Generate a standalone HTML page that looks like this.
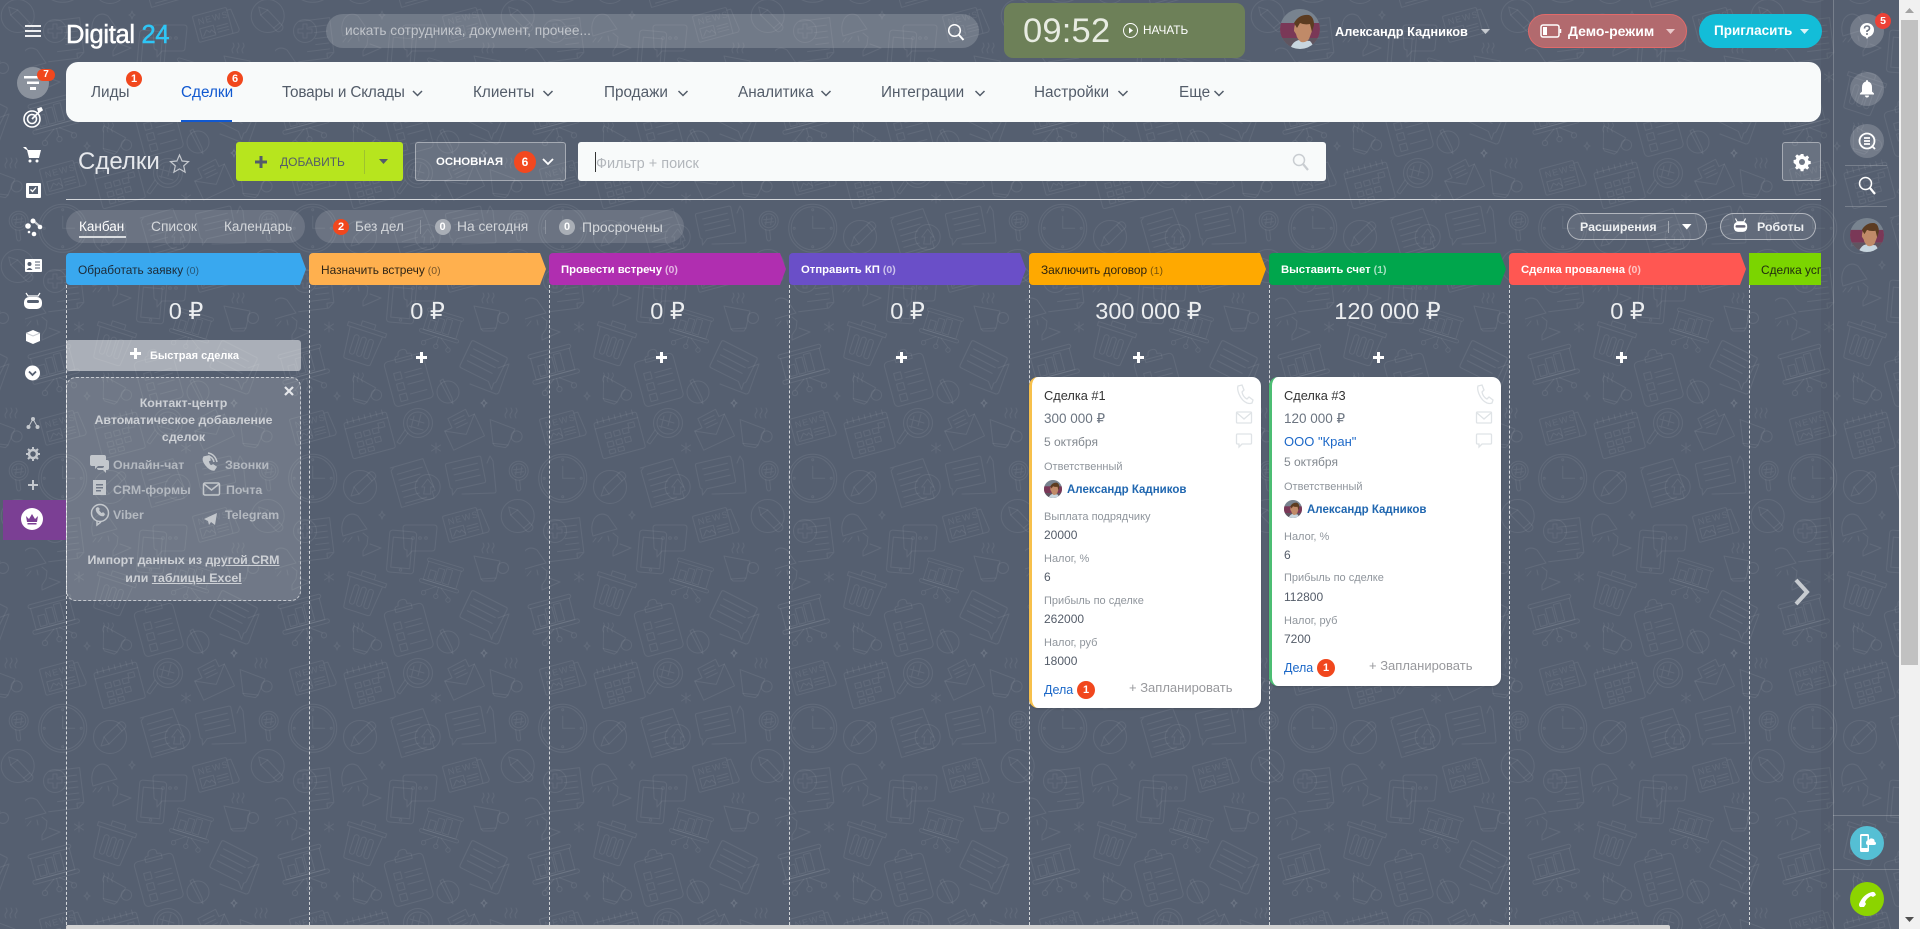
<!DOCTYPE html>
<html lang="ru"><head><meta charset="utf-8"><title>Сделки</title>
<style>
html,body{margin:0;padding:0;width:1920px;height:929px;overflow:hidden;background:#555f70;font-family:"Liberation Sans",sans-serif}
*{box-sizing:border-box}
.t{position:absolute;white-space:nowrap;line-height:20px;height:20px}
.a{position:absolute}
svg.a{overflow:visible}
.nav{color:#535c69;font-size:15.3px;top:83px}
.b{position:absolute;border-radius:50%;background:#f1471d;color:#fff;font-weight:bold;text-align:center;font-size:11px}
.st{position:absolute;top:253px;height:32px;border-radius:4px 0 0 4px;clip-path:polygon(0 0,calc(100% - 6px) 0,100% 50%,calc(100% - 6px) 100%,0 100%);font-size:11.9px;line-height:34px;padding-left:12px;white-space:nowrap;overflow:hidden}
.st i{font-style:normal;font-size:10.5px;opacity:.65;margin-left:3px}
.w{color:#fff;font-weight:bold;font-size:11.3px}
.dash{position:absolute;top:285px;height:640px;width:0;border-left:1px dashed rgba(255,255,255,.75)}
.sum{position:absolute;top:297px;height:28px;line-height:28px;font-size:23.5px;color:#eceef0;text-align:center;white-space:nowrap}
.pl{position:absolute;top:352px;width:11px;height:11px}
.pl:before,.pl:after{content:"";position:absolute;background:#fff}
.pl:before{left:0;top:4px;width:11px;height:2.5px}
.pl:after{left:4px;top:0;width:2.5px;height:11px}
.card{position:absolute;background:#fff;border-radius:9px;top:377px;box-shadow:0 1px 2px rgba(0,0,0,.15)}
.l{color:#8f959c;font-size:11px}
.v{color:#545c69;font-size:12px}
.cc{color:#cdd0d5;font-weight:bold;font-size:12.4px;text-align:center;left:66px;width:235px}
.ci{color:#b4b9c0;font-weight:bold;font-size:12.4px}
.rc{position:absolute;left:1850px;width:34px;border-radius:50%;background:rgba(255,255,255,.18)}
</style></head><body>

<svg class="a" style="left:0;top:0" width="1899" height="929">
<defs>
<g id="news"><rect x="-19" y="-13" width="35" height="27" rx="1.5"/><path d="M16-10h4l3 21q0 2-2 3l-5 0"/><text x="-15" y="-3" font-size="9" letter-spacing="1.2" font-family="Liberation Sans" fill="#fff" fill-opacity=".07" stroke="none">NEWS</text><rect x="-15" y="1" width="14" height="10"/><path d="M-13 9l4-5 3 3 2-2 3 4M2 3h11M2 6h11M2 9h11"/></g>
<g id="cup"><path d="M-15-11L11-6 7 11-8 12Z"/><path d="M-8 12l2 2h11l2-3"/><circle cx="14" cy="1" r="5.5"/></g>
<g id="steam"><path d="M-5 0q-2-3 0-5t0-5M0 0q-2-3 0-5t0-5M5 0q-2-3 0-5t0-5"/></g>
<g id="lamp"><path d="M-11-14q6-8 14-3l9 13q-12 3-24 7-3-9 1-17Z"/><path d="M-3 4l-4 5M3 3l1 5M-9 5l-3 4M8 0l5 4-1 8-4 6 0 5 18-8-11-4"/></g>
<g id="star"><path d="M0-4Q.6-.6 3 0 .6.6 0 4-.6.6-3 0-.6-.6 0-4Z"/></g>
<g id="ast"><path d="M0-5V5M-4.5-3L4.5 3M-4.5 3L4.5-3"/></g>
<g id="brd"><rect x="-22" y="-16" width="44" height="4" rx="2"/><path d="M-20-12v22h40v-22"/><rect x="-15" y="-3" width="7" height="11"/><rect x="-6" y="-8" width="7" height="16"/><rect x="3" y="-10" width="7" height="18"/><rect x="-24" y="10" width="48" height="4" rx="2"/><path d="M0 14v8M-3 14l-11 8M3 14l11 8"/><circle cx="-15" cy="25" r="2.6"/><circle cx="0" cy="25" r="2.6"/><circle cx="15" cy="25" r="2.6"/></g>
<g id="chat"><path d="M-19-11l32-5q2 0 2 2l3 23q0 2-2 2l-27 4-5 6 0-6q-2-1-2-3l-3-21q0-2 2-2Z"/><path d="M-14-5l25-4M-13 1l25-4M-12 7l25-4"/></g>
<g id="gl"><circle r="9.5"/><circle r="7"/><path d="M-3 9l1 9q1 3 3 2l1-1-1-9M-2-4l-1 8M3-4l-1 8M-5-1l9-1M-4 2l9-1"/></g>
<g id="pc"><circle r="16.5"/><path d="M-9 9l3-9 16-15q3-1 5 2t-1 5L-1 7Z"/><path d="M-6 0l5 7M7-12l5 6"/></g>
<g id="i" fill="none" stroke="#fff" stroke-opacity=".07" stroke-width="1" stroke-linejoin="round" stroke-linecap="round">
<use href="#news" transform="translate(36 27) rotate(-15)"/>
<use href="#news" transform="translate(189 124) rotate(-15)"/>
<g transform="translate(94 33) rotate(-15)"><rect x="-22" y="-16" width="44" height="37" rx="2"/><path d="M-22-10h44M-18-19v5M-12-19v5M-6-19v5M0-19v5M6-19v5M12-19v5M18-19v5"/><path d="M-14-3h6v5h-6zM-5-3h6v5h-6zM4-3h6v5h-6zM11-7h6v5h-6zM-14 6h6v5h-6zM-5 6h6v5h-6zM4 6h6v5h-6zM-14 14h6v4h-6zM-5 14h6v4h-6z"/></g>
<g transform="translate(143 23)"><circle r="14.5"/><circle r="11"/><path d="M-10 10l-8 11-3-2 8-12M-4-7l-3 12M3-9l-3 12M-8-4l14 4M-9 3l14 4"/></g>
<g transform="translate(186 28) rotate(-25)"><path d="M-16-4h8v-10l20-1 0 8h6v24l-34 0z"/><path d="M-16-4l18 12 16-15M-4-10h12M-4-6h12M-4-2h12"/></g>
<g transform="translate(228 33)"><use href="#cup" transform="rotate(10)"/><use href="#steam" transform="translate(8 -15)"/></g>
<g transform="translate(37.7 78.3)"><circle r="24"/><circle r="21.5"/><path d="M0-12V0H12"/><circle cy="-18.5" r="1"/><circle cy="18.5" r="1"/><circle cx="-18.5" r="1"/><circle cx="18.5" r="1"/></g>
<use href="#pc" transform="translate(85 87)"/>
<g transform="translate(139 82) rotate(-16)"><path d="M-19-20l34 0 3 34 0 0h-3v7h-34v-38l4-3"/><path d="M-14-12h26M-14-6h22M-14 0h18M-14 6h16M-14 12h16M-14 18h22"/></g>
<g transform="translate(152.7 87)"><circle r="12.5"/><path d="M0-8l-6 8h3l-1 7h7l0-7h3z"/></g>
<use href="#chat" transform="translate(192 73) rotate(-4)"/>
<path d="M187 94l2 0 30-1q2 0 2-2l-3-30-3-5-3 7"/>
<use href="#gl" transform="translate(243.7 70.7)"/>
<g transform="translate(242.7 116) rotate(90)"><use href="#pc"/></g>
<g transform="translate(45 138) rotate(-7)"><path d="M-18-19h30v35l-6 5h-30M12 16h-7v5"/><path d="M-10-12h18M-5-6h13M-5 0h13M-5 6h13M-14 12h22"/></g>
<g transform="translate(30 131)"><circle r="11.5"/><path d="M-2-7h4v5h5v4h-5v5h-4v-5h-5v-4h5z"/></g>
<use href="#lamp" transform="translate(80 133)"/>
<use href="#lamp" transform="translate(9 167)"/>
<use href="#star" transform="translate(107 115)"/>
<use href="#star" transform="translate(62 246)"/>
<use href="#star" transform="translate(209 253)"/>
<use href="#star" transform="translate(209 3)"/>
<use href="#ast" transform="translate(54 177)"/>
<use href="#ast" transform="translate(161 48)"/>
<g transform="translate(127 153) rotate(5)"><rect x="-14" y="-22" width="27" height="42" rx="3"/><rect x="-10" y="-15" width="19" height="30"/><circle cy="17" r="1.2"/></g>
<g><path d="M131 125h28q3 0 3 3l-2 20q0 3-3 3h-20l-5 6 0-7q-3 0-3-3l-1-19q0-3 3-3Z"/><circle cx="138" cy="138" r="1.3"/><circle cx="145" cy="138" r="1.3"/><circle cx="151" cy="138" r="1.3"/></g>
<g transform="translate(214 167)"><use href="#cup"/><use href="#steam" transform="translate(-1 -14)"/></g>
<g transform="translate(88 192) rotate(18)"><path d="M-20-15h40l0 4h-40zM-7-15v-5h14v5M-17-11l3 30q0 2 3 2h22q3 0 3-2l3-30"/><rect x="-10" y="-5" width="5" height="20" rx="2.5"/><rect x="-2.5" y="-5" width="5" height="20" rx="2.5"/><rect x="5" y="-5" width="5" height="20" rx="2.5"/></g>
<use href="#brd" transform="translate(167 176) rotate(17) scale(.85)"/>
<use href="#brd" transform="translate(28 215) rotate(-15)"/>
<g transform="translate(133 227) rotate(-15)"><rect x="-20" y="-20" width="40" height="46" rx="4"/><path d="M-8-20q0-3 4-3 0-5 5-5t4 5q5 0 4 3l0 3h-17z"/><path d="M-13-7h7v7h-7zM-13 4h7v7h-7zM-13 15h7v7h-7zM-2-5h17M-2 0h17M-2 7h17M-2 17h17"/></g>
<use href="#chat" transform="translate(207 212) rotate(18) scale(1.1) scale(-1 1)"/>
<path d="M195 234l26 10q2 0 3-2l10-28-11 4"/>
<g transform="translate(89 240) rotate(18)"><use href="#cup" transform="scale(.95)"/></g>
<use href="#steam" transform="translate(83 232) scale(.9)"/>
<g transform="translate(173 242)"><circle r="11"/><path d="M-5-13l-3 2 10 19 3 4-1-6z"/></g>
</g>
<pattern id="p" width="250" height="250" patternUnits="userSpaceOnUse" patternTransform="translate(25 150)"><use href="#i"/><use href="#i" x="-250"/><use href="#i" y="-250"/><use href="#i" x="-250" y="-250"/></pattern>
<clipPath id="av"><circle cx="20" cy="20" r="20"/></clipPath>
<g id="face" clip-path="url(#av)"><rect width="40" height="40" fill="#78838f"/><rect y="14" width="40" height="15" fill="#7a3857"/><rect y="29" width="40" height="11" fill="#5f5560"/><path d="M10 40q3-8 9-9l11 1q3 3 4 8z" fill="#c8d6df"/><path d="M16 13q8-5 15-1l1 10-3 8q-3 4-8 3-4-3-5-8l-2-3q0-5 2-9Z" fill="#c08a68"/><path d="M14 14q5-9 15-8 5 2 5 10l-2 7-2-8q-6 1-10-1l-3 5z" fill="#5c3c21"/></g>
</defs>
<rect width="1899" height="929" fill="#555f70"/>
<rect width="1899" height="929" fill="url(#p)"/>
<rect x="1821" width="12" height="929" fill="#000" fill-opacity=".035"/>
<rect x="1833" width="1" height="929" fill="#fff" fill-opacity=".2"/>
<rect x="1833" y="815" width="66" height="1" fill="#fff" fill-opacity=".2"/>
<rect x="1833" y="869" width="66" height="1" fill="#fff" fill-opacity=".2"/>
<rect x="1845" y="165" width="42" height="1" fill="#fff" fill-opacity=".2"/>
<rect x="1845" y="206" width="42" height="1" fill="#fff" fill-opacity=".2"/>
</svg>

<!-- scrollbars -->
<div class="a" style="left:1899px;top:0;width:21px;height:929px;background:#f1f1f1"></div>
<div class="a" style="left:1901px;top:20px;width:17px;height:645px;background:#c1c1c1"></div>
<svg class="a" style="left:1899px;top:0" width="21" height="929"><path d="M6 13l4.500-5 4.500 5z" fill="#a3a3a3"/><path d="M6 917l4.500 5 4.500-5z" fill="#505050"/></svg>
<div class="a" style="left:66px;top:925px;width:1604px;height:4px;background:#d2d2d2;border-radius:2px 2px 0 0"></div>

<!-- top bar -->
<svg class="a" style="left:24px;top:24px" width="18" height="14"><path d="M1 2h16M1 7h16M1 12h16" stroke="#fff" stroke-opacity=".9" stroke-width="2"/></svg>
<div class="t" style="left:66px;top:22px;height:26px;line-height:26px;font-size:25.5px;color:#fff;letter-spacing:-.3px;-webkit-text-stroke:.5px #fff">Digital <span style="color:#2fc6f6;-webkit-text-stroke:.5px #2fc6f6">24</span></div>
<div class="a" style="left:326px;top:14px;width:653px;height:34px;border-radius:17px;background:rgba(255,255,255,.17)"></div>
<div class="t" style="left:345px;top:21px;font-size:13.7px;color:rgba(255,255,255,.55)">искать сотрудника, документ, прочее...</div>
<svg class="a" style="left:947px;top:23px" width="18" height="18" fill="none" stroke="#fff" stroke-width="1.500"><circle cx="7.500" cy="7.500" r="5.800"/><path d="M12 12l4.500 5" stroke-width="2"/></svg>
<div class="a" style="left:1004px;top:3px;width:241px;height:55px;border-radius:9px;background:#6d8058"></div>
<div class="t" style="left:1023px;top:11px;height:40px;line-height:40px;font-size:34.5px;color:#e8ece2;letter-spacing:.2px">09:52</div>
<svg class="a" style="left:1122px;top:22px" width="17" height="17" fill="none" stroke="#fff"><circle cx="8.500" cy="8.500" r="7"/><path d="M7 5.500l4 3-4 3z" fill="#fff" stroke="none"/></svg>
<div class="t" style="left:1143px;top:20px;font-size:11.8px;color:#fff">НАЧАТЬ</div>
<svg class="a" style="left:1280px;top:9px" width="40" height="40" viewBox="0 0 40 40"><use href="#face"/></svg>
<div class="t" style="left:1335px;top:22px;font-size:12.8px;font-weight:bold;color:#fff">Александр Кадников</div>
<svg class="a" style="left:1481px;top:29px" width="9" height="6"><path d="M0 0h9L4.500 5z" fill="#c6cad0"/></svg>
<div class="a" style="left:1528px;top:14px;width:159px;height:34px;border-radius:17px;background:#b26a6e;border:1px solid #e26a6a"></div>
<svg class="a" style="left:1540px;top:23px" width="22" height="16" fill="none" stroke="#fff" stroke-width="1.500"><rect x="1" y="2" width="18" height="12" rx="2"/><rect x="3" y="4" width="4" height="8" fill="#fff" stroke="none"/><path d="M20.500 6v4"/></svg>
<div class="t" style="left:1568px;top:21px;font-size:14px;font-weight:bold;color:#fff">Демо-режим</div>
<svg class="a" style="left:1666px;top:29px" width="9" height="6"><path d="M0 0h9L4.500 5z" fill="#e9c9ca"/></svg>
<div class="a" style="left:1699px;top:14px;width:123px;height:34px;border-radius:17px;background:#13bdd8"></div>
<div class="t" style="left:1714px;top:21px;font-size:13.5px;font-weight:bold;color:#fff">Пригласить</div>
<svg class="a" style="left:1800px;top:29px" width="9" height="6"><path d="M0 0h9L4.500 5z" fill="#d8f4f9"/></svg>

<!-- nav -->
<div class="a" style="left:66px;top:62px;width:1755px;height:60px;border-radius:12px;background:#f8fafa"></div>
<div class="t nav" style="left:91px">Лиды</div>
<div class="b" style="left:126px;top:71px;width:16px;height:16px;line-height:16px">1</div>
<div class="t nav" style="left:181px;color:#1058d0">Сделки</div>
<div class="b" style="left:227px;top:71px;width:16px;height:16px;line-height:16px">6</div>
<div class="a" style="left:181px;top:120px;width:51px;height:2px;background:#1058d0"></div>
<div class="t nav" style="left:282px;letter-spacing:-.15px">Товары и Склады</div>
<div class="t nav" style="left:473px">Клиенты</div>
<div class="t nav" style="left:604px">Продажи</div>
<div class="t nav" style="left:738px">Аналитика</div>
<div class="t nav" style="left:881px">Интеграции</div>
<div class="t nav" style="left:1034px">Настройки</div>
<div class="t nav" style="left:1179px">Еще</div>
<svg class="a" style="left:0;top:0" width="1300" height="110" fill="none" stroke="#535c69" stroke-width="1.500"><path d="M413 91l4.500 4.500L422 91M543.500 91l4.500 4.500 4.500-4.500M678.500 91l4.500 4.500 4.500-4.500M821.500 91l4.500 4.500 4.500-4.500M975.500 91l4.500 4.500 4.500-4.500M1118.500 91l4.500 4.500 4.500-4.500M1214.500 91l4.500 4.500 4.500-4.500"/></svg>

<!-- toolbar -->
<div class="t" style="left:78px;top:147px;height:30px;line-height:30px;font-size:24px;color:#e6e8ec">Сделки</div>
<svg class="a" style="left:169px;top:153px" width="21" height="20" fill="none" stroke="#c3c7cd" stroke-width="1.200"><path d="M10.500 2l2.600 6 6.400.6-4.800 4.300 1.400 6.300-5.600-3.300-5.600 3.300 1.400-6.300L1.500 8.600 7.900 8z"/></svg>
<div class="a" style="left:236px;top:142px;width:167px;height:39px;border-radius:3px;background:#b7e51e"></div>
<svg class="a" style="left:254px;top:155px" width="14" height="14"><path d="M5.500 1h3v4.500H13v3H8.500V13h-3V8.500H1v-3h4.500z" fill="#535c69"/></svg>
<div class="t" style="left:280px;top:152px;font-size:12px;color:#535c69">ДОБАВИТЬ</div>
<div class="a" style="left:364px;top:150px;width:1px;height:24px;background:rgba(83,92,105,.25)"></div>
<svg class="a" style="left:379px;top:159px" width="9" height="6"><path d="M0 0h9L4.500 5z" fill="#535c69"/></svg>
<div class="a" style="left:415px;top:142px;width:151px;height:39px;border-radius:3px;background:rgba(255,255,255,.12);border:1px solid rgba(255,255,255,.4)"></div>
<div class="t" style="left:436px;top:152px;font-size:11.4px;font-weight:bold;color:#fff">ОСНОВНАЯ</div>
<div class="b" style="left:514px;top:151px;width:22px;height:22px;line-height:22px;font-size:12px;background:#f2481f">6</div>
<svg class="a" style="left:542px;top:157px" width="12" height="9" fill="none" stroke="#fff" stroke-width="1.800"><path d="M1 2l5 5 5-5"/></svg>
<div class="a" style="left:578px;top:142px;width:748px;height:39px;border-radius:3px;background:#f8fafa"></div>
<div class="a" style="left:595px;top:152px;width:1px;height:20px;background:#333"></div>
<div class="t" style="left:596px;top:154px;font-size:14.5px;color:#b2b6bb">Фильтр + поиск</div>
<svg class="a" style="left:1292px;top:153px" width="18" height="18" fill="none" stroke="#c9cdd1" stroke-width="1.500"><circle cx="7" cy="7" r="5.500"/><path d="M11 11l5 6" stroke-width="2.200"/></svg>
<div class="a" style="left:1782px;top:142px;width:39px;height:39px;border-radius:3px;background:rgba(255,255,255,.12);border:1px solid rgba(255,255,255,.4)"></div>
<svg class="a" style="left:1793px;top:153px" width="18" height="18" viewBox="0 0 18 18"><path d="M7.500 1h3l.4 2.300 1.700.7 1.900-1.300 2 2-1.300 1.900.7 1.700 2.300.4v3l-2.300.4-.7 1.700 1.300 1.900-2 2-1.900-1.300-1.700.7-.4 2.300h-3l-.4-2.300-1.700-.7-1.900 1.300-2-2 1.300-1.900-.7-1.700L0 10.500v-3l2.300-.4.7-1.700L1.700 3.500l2-2 1.900 1.300 1.700-.7z" transform="translate(.6 0) scale(.94)" fill="#fff"/><circle cx="9" cy="9" r="3" fill="#6e7684"/></svg>
<div class="a" style="left:66px;top:199px;width:1755px;height:1px;background:rgba(255,255,255,.75)"></div>

<!-- view + counters -->
<div class="a" style="left:66px;top:210px;width:239px;height:33px;border-radius:16.5px;background:rgba(255,255,255,.13)"></div>
<div class="t" style="left:79px;top:217px;font-size:13.5px;color:#fff">Канбан</div>
<div class="a" style="left:79px;top:236px;width:47px;height:2px;background:#d8dbdf"></div>
<div class="t" style="left:151px;top:217px;font-size:13.8px;color:#d5d8dc">Список</div>
<div class="t" style="left:224px;top:217px;font-size:13.5px;color:#d5d8dc">Календарь</div>
<div class="a" style="left:315px;top:210px;width:369px;height:33px;border-radius:16.5px;background:rgba(255,255,255,.13)"></div>
<div class="b" style="left:333px;top:219px;width:16px;height:16px;line-height:16px">2</div>
<div class="t" style="left:355px;top:217px;font-size:13.5px;color:#d5d8dc">Без дел</div>
<div class="a" style="left:420px;top:220px;width:1px;height:14px;background:rgba(255,255,255,.2)"></div>
<div class="b" style="left:434.5px;top:219px;width:16px;height:16px;line-height:16px;background:#a9aeb6">0</div>
<div class="t" style="left:457px;top:217px;font-size:13.8px;color:#d5d8dc">На сегодня</div>
<div class="a" style="left:545px;top:220px;width:1px;height:14px;background:rgba(255,255,255,.2)"></div>
<div class="b" style="left:559px;top:219px;width:16px;height:16px;line-height:16px;background:#a9aeb6">0</div>
<div class="t" style="left:582px;top:217px;font-size:14px;color:#d5d8dc">Просрочены</div>
<div class="a" style="left:1567px;top:213px;width:140px;height:27px;border-radius:13.5px;background:rgba(255,255,255,.08);border:1px solid rgba(255,255,255,.5)"></div>
<div class="t" style="left:1580px;top:217px;font-size:12.4px;font-weight:bold;color:#eef0f2">Расширения</div>
<div class="a" style="left:1668px;top:221px;width:1px;height:12px;background:rgba(255,255,255,.4)"></div>
<svg class="a" style="left:1682px;top:224px" width="10" height="7"><path d="M0 0h9.500L4.800 5.500z" fill="#fff"/></svg>
<div class="a" style="left:1720px;top:213px;width:96px;height:27px;border-radius:13.5px;background:rgba(255,255,255,.08);border:1px solid rgba(255,255,255,.5)"></div>
<svg class="a" style="left:1733px;top:216px" width="15" height="20" viewBox="0 0 18 20"><path d="M3 1l2 4h8l2-4" stroke="#fff" stroke-width="1.300" fill="none"/><rect x="1" y="5" width="16" height="12" rx="5" fill="#fff"/><rect x="3" y="9" width="12" height="3" rx="1.500" fill="#667"/></svg>
<div class="t" style="left:1757px;top:217px;font-size:12.4px;font-weight:bold;color:#eef0f2">Роботы</div>

<!-- stages -->
<div class="st" style="left:66px;width:240px;background:#39a8ef;color:#1d2a36">Обработать заявку<i>(0)</i></div>
<div class="st" style="left:309px;width:237px;background:#ffb04e;color:#2d2416">Назначить встречу<i>(0)</i></div>
<div class="st w" style="left:549px;width:237px;background:#b02eb0">Провести встречу<i>(0)</i></div>
<div class="st w" style="left:789px;width:237px;background:#6a4fc8">Отправить КП<i>(0)</i></div>
<div class="st" style="left:1029px;width:237px;background:#ffa900;color:#2d2410">Заключить договор<i>(1)</i></div>
<div class="st w" style="left:1269px;width:237px;background:#00a64c">Выставить счет<i>(1)</i></div>
<div class="st w" style="left:1509px;width:237px;background:#ff5752">Сделка провалена<i>(0)</i></div>
<div class="st" style="left:1749px;width:72px;background:#7bd500;color:#1f2a10;clip-path:none;border-radius:0">Сделка успешна</div>
<div class="dash" style="left:66px"></div><div class="dash" style="left:309px"></div><div class="dash" style="left:549px"></div><div class="dash" style="left:789px"></div><div class="dash" style="left:1029px"></div><div class="dash" style="left:1269px"></div><div class="dash" style="left:1509px"></div><div class="dash" style="left:1749px"></div>

<div class="sum" style="left:66px;width:240px">0 ₽</div>
<div class="sum" style="left:309px;width:237px">0 ₽</div>
<div class="sum" style="left:549px;width:237px">0 ₽</div>
<div class="sum" style="left:789px;width:237px">0 ₽</div>
<div class="sum" style="left:1030px;width:237px">300 000 ₽</div>
<div class="sum" style="left:1269px;width:237px">120 000 ₽</div>
<div class="sum" style="left:1509px;width:237px">0 ₽</div>
<div class="pl" style="left:416px"></div><div class="pl" style="left:656px"></div><div class="pl" style="left:896px"></div><div class="pl" style="left:1133px"></div><div class="pl" style="left:1373px"></div><div class="pl" style="left:1616px"></div>

<!-- first column -->
<div class="a" style="left:66px;top:340px;width:235px;height:31px;border-radius:3px;background:rgba(255,255,255,.5)"></div>
<div class="a" style="left:130px;top:352px;width:11px;height:2.5px;background:#fff"></div><div class="a" style="left:134px;top:348px;width:2.5px;height:11px;background:#fff"></div>
<div class="t" style="left:150px;top:346px;font-size:11px;font-weight:bold;color:#fff">Быстрая сделка</div>
<div class="a" style="left:66px;top:377px;width:235px;height:224px;border-radius:10px;background:rgba(255,255,255,.16);border:1px dashed rgba(255,255,255,.6)"></div>
<svg class="a" style="left:284px;top:386px" width="10" height="10"><path d="M1 1l8 8M9 1L1 9" stroke="#e5e7ea" stroke-width="2.200"/></svg>
<div class="t cc" style="top:393px">Контакт-центр</div>
<div class="t cc" style="top:410px">Автоматическое добавление</div>
<div class="t cc" style="top:427px">сделок</div>
<div class="t ci" style="left:113px;top:455px">Онлайн-чат</div>
<div class="t ci" style="left:225px;top:455px">Звонки</div>
<div class="t ci" style="left:113px;top:480px">CRM-формы</div>
<div class="t ci" style="left:226px;top:480px">Почта</div>
<div class="t ci" style="left:113px;top:505px">Viber</div>
<div class="t ci" style="left:225px;top:505px">Telegram</div>
<svg class="a" style="left:88px;top:453px" width="135" height="80">
<g fill="#c3c7cc"><path d="M2 2h12q2 0 2 2v7q0 2-2 2H8l-3 3v-3H2q-2 0-2-2V4q0-2 2-2z" transform="translate(2 0)"/><path d="M14 7h5q2 0 2 2v6q0 2-2 2h-1v3l-3-3h-4q-2 0-2-2h5q2 0 2-2z"/>
<path d="M5 27h13v15H5zM8 31v1.500h7V31zM8 34v1.500h7V34zM8 37v1.500h5V37z" fill-rule="evenodd"/>
<path d="M116 11l13-6-2 12-4-3-2 3-1-4z" transform="translate(0 55)"/></g>
<g fill="none" stroke="#c3c7cc" stroke-width="1.500"><path d="M116 4q-2 3 2 8t8 5l2-3-3-2-2 1q-2-1-3-5l2-1-1-4z" fill="#c3c7cc"/><path d="M120 3q5 1 6 6M120 0q7 1 9 9"/><rect x="115.500" y="30" width="16" height="12" rx="1.500"/><path d="M116 31l7.500 6 7.500-6"/><circle cx="12" cy="60" r="8.500"/><path d="M9 68v4l4-3"/></g>
<path d="M8 55q-1 3 2 6t6 2l1-2-2-2-1 1q-1 0-3-3l1-1-2-2z" fill="#c3c7cc"/></svg>
<div class="t cc" style="top:550px">Импорт данных из <u>другой CRM</u></div>
<div class="t cc" style="top:568px">или <u>таблицы Excel</u></div>

<!-- Card 1 -->
<div class="card" style="left:1029px;width:232px;height:331px;border-left:3px solid #f7c04b"></div>
<div class="t" style="left:1044px;top:386px;font-size:12.8px;color:#333">Сделка #1</div>
<div class="t" style="left:1044px;top:409px;font-size:13.5px;color:#6b7480">300 000 ₽</div>
<div class="t" style="left:1044px;top:432px;font-size:12px;color:#82888f">5 октября</div>
<div class="t l" style="left:1044px;top:457px">Ответственный</div>
<svg class="a" style="left:1044px;top:480px" width="18" height="18" viewBox="0 0 40 40"><use href="#face"/></svg>
<div class="t" style="left:1067px;top:480px;font-size:11.5px;font-weight:bold;color:#2067b0">Александр Кадников</div>
<div class="t l" style="left:1044px;top:507px">Выплата подрядчику</div><div class="t v" style="left:1044px;top:525px">20000</div>
<div class="t l" style="left:1044px;top:549px">Налог, %</div><div class="t v" style="left:1044px;top:567px">6</div>
<div class="t l" style="left:1044px;top:591px">Прибыль по сделке</div><div class="t v" style="left:1044px;top:609px">262000</div>
<div class="t l" style="left:1044px;top:633px">Налог, руб</div><div class="t v" style="left:1044px;top:651px">18000</div>
<div class="t" style="left:1044px;top:680px;font-size:12.5px;color:#1c68c8">Дела</div>
<div class="b" style="left:1077px;top:681px;width:18px;height:18px;line-height:18px">1</div>
<div class="t" style="left:1129px;top:678px;font-size:13px;color:#98999d">+ Запланировать</div>
<svg class="a" style="left:1236px;top:385px" width="18" height="66" fill="none" stroke="#dfe3e6" stroke-width="1.300"><path d="M2 1l4-1 2 5-2 2q1 5 5 7l2-2 4 3-1 3q-2 1-5 0-5-2-8-9-2-5-1-8z"/><rect x=".5" y="27" width="15" height="11" rx="1"/><path d="M1 28l7 6 7-6"/><path d="M1.500 49h13q1 0 1 1v8q0 1-1 1H6l-3 3v-3H1.500q-1 0-1-1v-8q0-1 1-1z"/></svg>

<!-- Card 2 -->
<div class="card" style="left:1269px;width:232px;height:309px;border-left:3px solid #4cbd73"></div>
<div class="t" style="left:1284px;top:386px;font-size:12.8px;color:#333">Сделка #3</div>
<div class="t" style="left:1284px;top:409px;font-size:13.5px;color:#6b7480">120 000 ₽</div>
<div class="t" style="left:1284px;top:432px;font-size:13px;color:#1c68c8">ООО "Кран"</div>
<div class="t" style="left:1284px;top:452px;font-size:12px;color:#82888f">5 октября</div>
<div class="t l" style="left:1284px;top:477px">Ответственный</div>
<svg class="a" style="left:1284px;top:500px" width="18" height="18" viewBox="0 0 40 40"><use href="#face"/></svg>
<div class="t" style="left:1307px;top:500px;font-size:11.5px;font-weight:bold;color:#2067b0">Александр Кадников</div>
<div class="t l" style="left:1284px;top:527px">Налог, %</div><div class="t v" style="left:1284px;top:545px">6</div>
<div class="t l" style="left:1284px;top:568px">Прибыль по сделке</div><div class="t v" style="left:1284px;top:587px">112800</div>
<div class="t l" style="left:1284px;top:611px">Налог, руб</div><div class="t v" style="left:1284px;top:629px">7200</div>
<div class="t" style="left:1284px;top:658px;font-size:12.5px;color:#1c68c8">Дела</div>
<div class="b" style="left:1317px;top:659px;width:18px;height:18px;line-height:18px">1</div>
<div class="t" style="left:1369px;top:656px;font-size:13px;color:#98999d">+ Запланировать</div>
<svg class="a" style="left:1476px;top:385px" width="18" height="66" fill="none" stroke="#dfe3e6" stroke-width="1.300"><path d="M2 1l4-1 2 5-2 2q1 5 5 7l2-2 4 3-1 3q-2 1-5 0-5-2-8-9-2-5-1-8z"/><rect x=".5" y="27" width="15" height="11" rx="1"/><path d="M1 28l7 6 7-6"/><path d="M1.500 49h13q1 0 1 1v8q0 1-1 1H6l-3 3v-3H1.500q-1 0-1-1v-8q0-1 1-1z"/></svg>

<svg class="a" style="left:1794px;top:578px" width="16" height="28" fill="none" stroke="#c7cbd0" stroke-width="4"><path d="M2 2l11 12L2 26"/></svg>

<!-- left sidebar -->
<div class="a" style="left:17px;top:67px;width:32px;height:32px;border-radius:50%;background:#8b929d"></div>
<svg class="a" style="left:24px;top:76px" width="18" height="16"><path d="M0 0h18v2.500H0zM3 5.500h12V8H3zM6 11h6v3H6z" fill="#fff"/></svg>
<div class="b" style="left:37px;top:69px;width:18px;height:12px;line-height:12px;border-radius:7px;font-size:10px">7</div>
<svg class="a" style="left:0;top:100px" width="66" height="410">
<g fill="none" stroke="#fff" stroke-width="1.600"><circle cx="32" cy="19" r="8"/><circle cx="32" cy="19" r="4.500"/><path d="M32 19l8-8"/><path d="M38 9l3-1 1 2-3 2z" fill="#fff"/></g>
<path d="M23 47h3l2 3h13l-2 8H29l-2-8-2-1z" fill="#fff"/><circle cx="30" cy="61" r="1.500" fill="#fff"/><circle cx="37" cy="61" r="1.500" fill="#fff"/>
<rect x="26" y="83" width="15" height="15" rx="1" fill="#fff"/><rect x="29" y="86" width="9" height="8" fill="#555f70"/><path d="M30.500 89.500l2 2 3.500-4" stroke="#fff" stroke-width="1.300" fill="none"/>
<g fill="#fff"><circle cx="33" cy="121" r="2.500"/><circle cx="40" cy="127" r="2.300"/><circle cx="34" cy="134" r="2.300"/><circle cx="28" cy="126" r="2.800"/><circle cx="29" cy="132" r="1.300"/><path d="M33 119l8 7-1 2-8-7z" opacity=".7"/></g>
<rect x="25" y="159" width="17" height="13" rx="1" fill="#fff"/><circle cx="29.500" cy="164" r="2" fill="#555f70"/><path d="M26.500 170q3-4 6 0z" fill="#555f70"/><path d="M35 162h5M35 165h5M35 168h5" stroke="#555f70" stroke-width="1"/>
<path d="M26 193l2 3h10l2-3" stroke="#fff" stroke-width="1.200" fill="none"/><rect x="24" y="197" width="18" height="12" rx="5" fill="#fff"/><rect x="27" y="200" width="12" height="3" rx="1.500" fill="#555f70"/>
<path d="M33 230l7 3v8l-7 3-7-3v-8z" fill="#fff"/><path d="M26 233l7 3 7-3" stroke="#c4c8ce" fill="none"/>
<circle cx="32.500" cy="273" r="7.500" fill="#fff"/><path d="M29 271.500l3.500 3.500 3.500-3.500" fill="none" stroke="#555f70" stroke-width="1.800"/>
<g fill="#c3c7cd"><circle cx="33" cy="319" r="2"/><circle cx="28.500" cy="327" r="2"/><circle cx="37.500" cy="327" r="2"/></g><path d="M33 319l-4.500 8M33 319l4.500 8" stroke="#c3c7cd"/>
<circle cx="33" cy="354" r="4" fill="none" stroke="#c3c7cd" stroke-width="2.500"/><path d="M33 347v3M33 358v3M26 354h3M37 354h3M28 349l2 2M36 357l2 2M28 359l2-2M36 351l2-2" stroke="#c3c7cd" stroke-width="2"/>
<path d="M28 385h10M33 380v10" stroke="#c3c7cd" stroke-width="2"/>
</svg>
<div class="a" style="left:3px;top:500px;width:63px;height:40px;background:#7b3f94"></div>
<div class="a" style="left:21px;top:508px;width:22px;height:22px;border-radius:50%;background:#fff"></div>
<svg class="a" style="left:25px;top:513px" width="14" height="12"><path d="M1 3l3 3 3-5 3 5 3-3-1 6H2zM2.500 10h9v1.500h-9z" fill="#7b3f94"/></svg>

<!-- right panel -->
<div class="rc" style="top:14px;height:34px"></div>
<svg class="a" style="left:1860px;top:23px" width="14" height="17"><circle cx="7" cy="7" r="7" fill="#fff"/><path d="M4.500 5.500q0-2.500 2.500-2.500t2.500 2.300q0 1.500-2.500 2.700v1" fill="none" stroke="#6f7683" stroke-width="1.600"/><circle cx="7" cy="11" r="1" fill="#6f7683"/><path d="M5 13l2 3 2-3z" fill="#fff"/></svg>
<div class="b" style="left:1875px;top:13px;width:16px;height:16px;line-height:16px;font-size:10.5px;background:#ec4136">5</div>
<div class="rc" style="top:72px;height:34px"></div>
<svg class="a" style="left:1860px;top:80px" width="14" height="18"><path d="M7 0q1 0 1 1.500 4 1 4 6v4l2 2v1H0v-1l2-2v-4q0-5 4-6Q6 0 7 0zM5 15.500h4q0 2-2 2t-2-2z" fill="#fff"/></svg>
<div class="rc" style="top:124px;height:34px"></div>
<svg class="a" style="left:1858px;top:132px" width="18" height="18" fill="none" stroke="#fff" stroke-width="1.800"><circle cx="9" cy="9" r="7.500"/><path d="M6 6h6M6 9h6M6 12h6M14 14l3 3"/></svg>
<svg class="a" style="left:1858px;top:176px" width="19" height="20" fill="none" stroke="#fff"><circle cx="7.500" cy="7.500" r="6" stroke-width="1.500"/><path d="M12 12l5 6" stroke-width="2.200"/></svg>
<svg class="a" style="left:1850px;top:218px" width="34" height="34" viewBox="0 0 40 40"><use href="#face"/></svg>
<div class="a" style="left:1850px;top:826px;width:34px;height:34px;border-radius:50%;background:#55bfd4"></div>
<svg class="a" style="left:1860px;top:834px" width="16" height="18"><rect x="0" y="0" width="9" height="18" rx="1.500" fill="#fff"/><rect x="1.500" y="2" width="6" height="12" fill="#55bfd4"/><path d="M6 9q0-3 3-3 1-2 3-1.500 3 .5 2.500 3 1.500 .5 1.500 2t-2 1.500H8q-2 0-2-2z" fill="#fff"/></svg>
<div class="a" style="left:1850px;top:882px;width:34px;height:34px;border-radius:50%;background:#8cd400"></div>
<svg class="a" style="left:1859px;top:891px" width="17" height="17"><path d="M1 16q-2-2 0-5 4-8 12-10 2-.5 3 1l1 2-3 2-2-1q-4 2-6 6l1 2-2 3z" fill="#fff"/></svg>
</body></html>
